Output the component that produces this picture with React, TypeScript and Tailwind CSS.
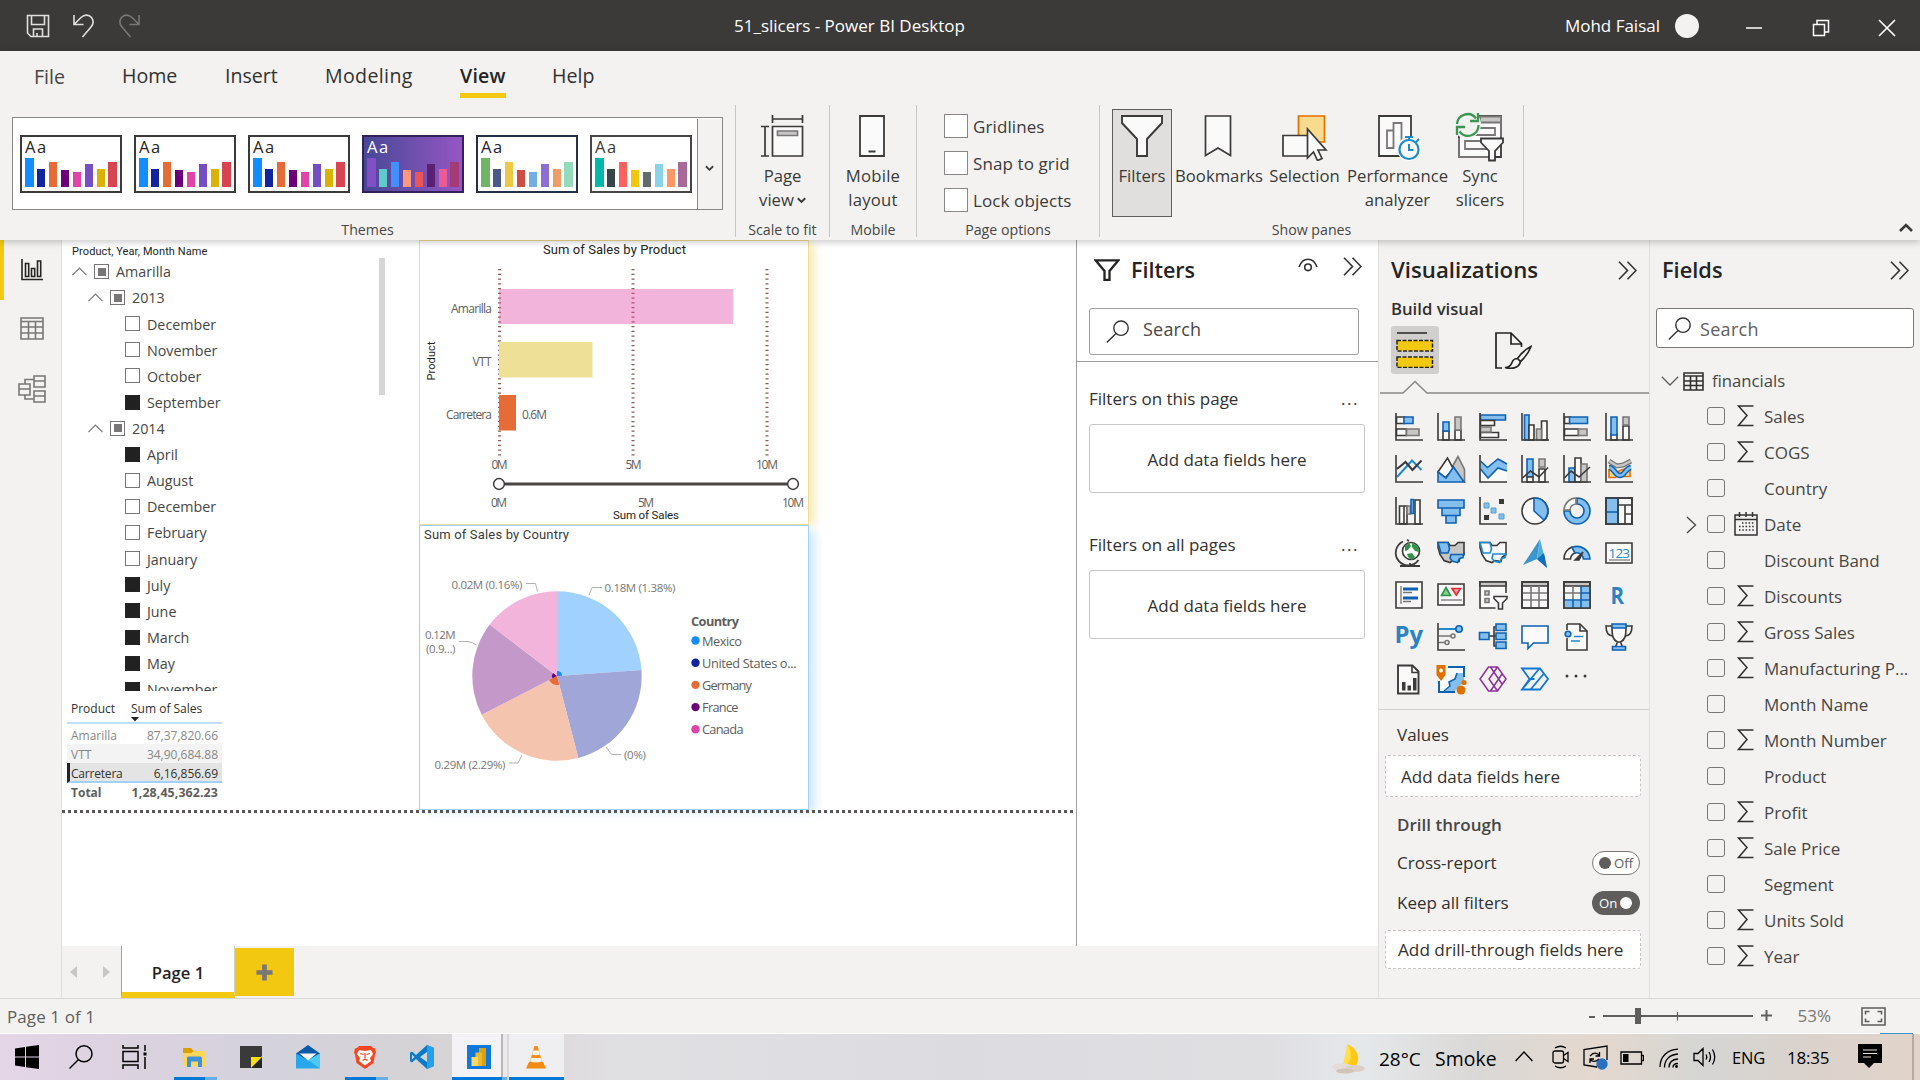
import type { ReactNode } from "react";

const INK = "#3b3a39";
const BLUE = "#0f62b3";
const SKY = "#83beec";
const GREY = "#797775";
const SILVER = "#c8c6c4";
const PAPER = "#fafafa";

/* ---------- title bar ---------- */

function TitleBar() {
  return (
    <header className="flex h-[51px] shrink-0 items-center bg-[#3b3a39] text-[17px] text-white">
      <div className="flex w-[734px] items-center gap-[22px] pl-[26px]">
        <svg width="24" height="24" viewBox="0 0 24 24" fill="none" stroke="#e1dfdd" strokeWidth="1.600">
          <path d="M1.500 1.500h21v21H5l-3.500-3.500z" />
          <path d="M5.500 1.500v9h13v-9M7.500 22v-7h9v7M11 22v-3" />
        </svg>
        <svg width="24" height="24" viewBox="0 0 24 24" fill="none" stroke="#e1dfdd" strokeWidth="1.600">
          <path d="M2 1v9.500h9.500M2.500 10l6.500-6.500c3.500-3.300 8-3 10.500 0 2.500 3.200 2 6.500-.5 9.500L10.500 23" />
        </svg>
        <svg width="24" height="24" viewBox="0 0 24 24" fill="none" stroke="#797775" strokeWidth="1.600" className="-ml-[1px]">
          <path d="M22 1v9.500h-9.500M21.500 10L15 3.500c-3.500-3.300-8-3-10.500 0-2.500 3.200-2 6.500.5 9.500l8.500 10" />
        </svg>
      </div>
      <div className="w-[232px] whitespace-nowrap pt-px">51_slicers - Power BI Desktop</div>
      <div className="flex flex-1 items-center justify-end pr-[24px]">
        <span className="pt-px">Mohd Faisal</span>
        <span className="ml-[15px] size-[24px] rounded-full bg-[#f3f2f1]" />
        <svg className="ml-[46px]" width="18" height="18" viewBox="0 0 18 18" stroke="#fff" strokeWidth="1.500"><path d="M1 11h16" /></svg>
        <svg className="ml-[49px] mt-[4px]" width="18" height="18" viewBox="0 0 18 18" fill="none" stroke="#fff" strokeWidth="1.500"><path d="M1.500 5.500h11v11h-11zM5 5V1.500h11.500V13H13" /></svg>
        <svg className="ml-[48px] mt-[4px]" width="18" height="18" viewBox="0 0 18 18" stroke="#fff" strokeWidth="1.700"><path d="M1 1l16 16M17 1L1 17" /></svg>
      </div>
    </header>
  );
}

/* ---------- ribbon ---------- */

function Tabs() {
  return (
    <nav className="flex h-[54px] shrink-0 text-[19.600px] leading-[50px] text-[#323130]">
      <span className="ml-[34px] w-[88px] pt-px text-[#484644]">File</span>
      <span className="w-[103px]">Home</span>
      <span className="w-[100px]">Insert</span>
      <span className="w-[135px] tracking-[0.350px]">Modeling</span>
      <span className="h-[47px] w-[46px] border-b-[5px] border-[#f2c811] font-semibold tracking-[0.200px] text-[#252423]">View</span>
      <span className="ml-[46px]">Help</span>
    </nav>
  );
}

const barHeights = [29, 18, 25, 17, 15, 23, 18, 25];
const classic = ["#118dff", "#12239e", "#e66c37", "#6b007b", "#e044a7", "#744ec2", "#d9b300", "#d64550"];
const themes = [
  { box: "border-[#3b3a39] bg-white", text: "text-[#252423]", bars: classic },
  { box: "border-[#3b3a39] bg-white", text: "text-[#252423]", bars: classic },
  { box: "border-[#3b3a39] bg-white", text: "text-[#252423]", bars: classic },
  {
    box: "border-[#33225a] bg-linear-to-r from-[#474796] to-[#9556c4]",
    text: "text-white",
    bars: ["#8250c4", "#5ecbc8", "#438fff", "#ff977e", "#eb5757", "#5b2071", "#ec5a96", "#a43b76"],
  },
  {
    box: "border-[#252f4a] bg-white",
    text: "text-[#1b1f3a]",
    bars: ["#70b565", "#4a588a", "#ecc846", "#cd4c46", "#71afe2", "#8d6fd1", "#ee9e64", "#95dabb"],
  },
  {
    box: "border-[#484644] bg-white",
    text: "text-[#3b3a39]",
    bars: ["#01b8aa", "#374649", "#fd625e", "#f2c80f", "#5f6b6d", "#8ad4eb", "#fe9666", "#a66999"],
  },
];

function ThemeThumb({ box, text, bars }: (typeof themes)[number]) {
  return (
    <div className={`flex h-[58px] w-[102px] flex-col justify-between border-2 px-[3px] pb-[4px] ${box}`}>
      <span className={`text-[16.500px] leading-[20px] tracking-[1.500px] ${text}`}>Aa</span>
      <div className="flex items-end gap-[3.400px]">
        {bars.map((c, i) => (
          <span key={i} className="w-[8.600px]" style={{ height: barHeights[i], background: c }} />
        ))}
      </div>
    </div>
  );
}

function Group({ width, label, children }: { width: string; label: string; children: ReactNode }) {
  return (
    <section className={`flex h-[132px] shrink-0 flex-col border-r border-[#c8c6c4] ${width}`}>
      <div className="flex h-[112px] shrink-0">{children}</div>
      <div className="h-[20px] text-center text-[14.200px] leading-[25px] text-[#484644]">{label}</div>
    </section>
  );
}

function Tool({ className, icon, children }: { className: string; icon: ReactNode; children: ReactNode }) {
  return (
    <div className={`flex shrink-0 flex-col items-center whitespace-nowrap text-center text-[16.700px] leading-[24px] text-[#3b3a39] ${className}`}>
      <div className="mb-[7px] flex h-[42px] items-center justify-center">{icon}</div>
      {children}
    </div>
  );
}

const pageViewIcon = (
  <svg width="44" height="42" viewBox="0 0 44 42" fill="none" stroke={INK} strokeWidth="1.700" className="mr-[2px]">
    <path d="M12.500 0v8M42.500 0v8M12.500 4h30" />
    <path d="M1 11.500h8M1 41h8M5 11.500V41" />
    <path d="M12.500 11.500h30V41h-30z" fill={PAPER} />
    <path d="M17.500 16h20v4.500h-20z" fill={SILVER} stroke={GREY} />
  </svg>
);
const mobileIcon = (
  <svg width="26" height="42" viewBox="0 0 26 42" fill={PAPER} stroke={INK} strokeWidth="1.800" className="mr-[2px]">
    <path d="M1 1h24v40H1zM9.500 36.500h7" />
  </svg>
);
const funnelIcon = (
  <svg width="42" height="42" viewBox="0 0 42 42" fill={PAPER} stroke={INK} strokeWidth="1.900">
    <path d="M1 1h40v7L26 24v17H16V24L1 8z" />
  </svg>
);
const bookmarkIcon = (
  <svg width="28" height="42" viewBox="0 0 28 42" fill={PAPER} stroke={INK} strokeWidth="1.700" className="mr-[2px]">
    <path d="M1.500 1h25v39.500L14 33 1.500 40.500z" />
  </svg>
);
const selectionIcon = (
  <svg width="46" height="46" viewBox="0 0 46 46" className="mt-[4px]" strokeWidth="1.700">
    <path d="M16.500 1h26v26h-26z" fill="#f8db8f" stroke="#e07000" />
    <path d="M1 20.500h25V41H1z" fill={PAPER} stroke={INK} />
    <path d="M25.500 14v29l6-6 4 8.500 4.500-2-4-8.500h8z" fill={PAPER} stroke={INK} />
  </svg>
);
const performanceIcon = (
  <svg width="44" height="46" viewBox="0 0 44 46" className="ml-[4px] mt-[4px]" fill="none" strokeWidth="1.800">
    <path d="M1 1h32v40H1z" fill={PAPER} stroke={INK} />
    <path d="M9 33V15.500h6.500V33zM15.500 33V8h8v25" stroke={GREY} />
    <circle cx="31" cy="34" r="12" fill={PAPER} stroke="none" />
    <circle cx="31" cy="34.500" r="9.500" fill={PAPER} stroke="#1e8bcd" strokeWidth="2.200" />
    <path d="M27 22h8M31 22v3M38 27l3-3M31 29v6h4.500" stroke="#1e8bcd" strokeWidth="2" />
  </svg>
);
const syncIcon = (
  <svg width="50" height="50" viewBox="0 0 50 50" className="mt-[2px]" fill="none" strokeWidth="1.800">
    <path d="M4 4h42v41H4z" fill={PAPER} stroke={INK} />
    <path d="M25 4.500h21v6H25z" fill={SILVER} stroke={GREY} />
    <path d="M4 26V45h29M46 10v15M10 29h24v8H10zM23 16h17v7H20" stroke={GREY} />
    <circle cx="12" cy="12.500" r="14" fill="#f3f2f1" />
    <path d="M2 12a10.500 10.500 0 0 1 19-5.500M23.500 13a10.500 10.500 0 0 1-19 6.500" stroke="#3a9650" strokeWidth="2.300" />
    <path d="M23 1v8h-8M2 23v-8h8" stroke="#3a9650" strokeWidth="2.300" />
    <path d="M26 26.500h22v4l-8 8.500v9.500h-6V39l-8-8.500z" fill={PAPER} stroke={INK} />
  </svg>
);

function Ribbon() {
  return (
    <div className="relative z-10 h-[189px] shrink-0 bg-[#f3f2f1] shadow-[0_2px_7px_rgba(0,0,0,0.22)]">
      <Tabs />
      <div className="flex h-[135px]">
        <Group width="w-[736px]" label="Themes">
          <div className="ml-[12px] mt-[12px] flex h-[93px] w-[711px] border border-[#8a8886] bg-white">
            <div className="flex flex-1 gap-[12px] pl-[7px] pt-[17px]">
              {themes.map((t, i) => (
                <ThemeThumb key={i} {...t} />
              ))}
            </div>
            <div className="mt-px flex w-[25px] items-center justify-center border-l border-[#8a8886] bg-[#f3f2f1]">
              <svg width="9" height="7" viewBox="0 0 10 7" className="mt-[9px] mr-[2px]" fill="none" stroke={INK} strokeWidth="2"><path d="M1 1l4 4 4-4" /></svg>
            </div>
          </div>
        </Group>
        <Group width="w-[94px]" label="Scale to fit">
          <Tool className="w-full pt-[10px]" icon={pageViewIcon}>
            <span>Page</span>
            <span className="flex items-center gap-[3px]">
              view
              <svg width="9" height="7" viewBox="0 0 9 7" fill="none" stroke={INK} strokeWidth="2"><path d="M.8 1.200l3.700 3.700 3.700-3.700" /></svg>
            </span>
          </Tool>
        </Group>
        <Group width="w-[87px]" label="Mobile">
          <Tool className="w-full pt-[10px]" icon={mobileIcon}>
            <span className="tracking-[0.200px]">Mobile</span>
            <span className="tracking-[0.200px]">layout</span>
          </Tool>
        </Group>
        <Group width="w-[183px]" label="Page options">
          <div className="ml-[27px] mt-[9px] flex flex-col gap-[13px] text-[17px] leading-[24px] text-[#3b3a39]">
            {["Gridlines", "Snap to grid", "Lock objects"].map((t) => (
              <label key={t} className="flex h-[24px] items-center gap-[5px]">
                <span className="size-[24px] border border-[#8a8886] bg-white" />
                <span className="pt-px tracking-[0.100px]">{t}</span>
              </label>
            ))}
          </div>
        </Group>
        <Group width="w-[424px]" label="Show panes">
          <Tool className="ml-[12px] mt-[4px] h-[108px] w-[60px] border border-[#605e5c] bg-[#e1dfdd] pt-[5px]" icon={funnelIcon}>Filters</Tool>
          <Tool className="ml-[2px] w-[90px] pt-[10px]" icon={bookmarkIcon}>Bookmarks</Tool>
          <Tool className="ml-[3px] w-[75px] pt-[10px]" icon={selectionIcon}>Selection</Tool>
          <Tool className="ml-[4px] w-[103px] pt-[10px]" icon={performanceIcon}>
            <span>Performance</span>
            <span>analyzer</span>
          </Tool>
          <Tool className="ml-[3px] w-[56px] pt-[10px]" icon={syncIcon}>
            <span>Sync</span>
            <span>slicers</span>
          </Tool>
        </Group>
        <svg className="mb-[8px] ml-auto mr-[7px] self-end" width="14" height="9" viewBox="0 0 14 9" fill="none" stroke={INK} strokeWidth="2.600"><path d="M1 8l6-6 6 6" /></svg>
      </div>
    </div>
  );
}

/* ---------- left navigation ---------- */

function SideNav() {
  return (
    <aside className="flex w-[62px] shrink-0 flex-col border-r border-[#e1dfdd] bg-[#f3f2f1]">
      <div className="flex h-[60px] items-center border-l-4 border-[#f2c811] pl-[17px]">
        <svg width="22" height="22" viewBox="0 0 22 22" fill="none" stroke="#252423" strokeWidth="1.600">
          <path d="M1 0v20.500h21M4.500 4.500h3.200v13H4.500zM10.500 9.500h3.200v8h-3.200zM16.500 2h3.200v15.500h-3.200z" />
        </svg>
      </div>
      <svg className="ml-[20px] mt-[17px]" width="24" height="23" viewBox="0 0 24 23" fill="none" stroke={GREY} strokeWidth="1.600">
        <path d="M1 1h22v21H1zM1 4.500h22M1 10h22M1 16h22M8.500 4.500V22M15.500 4.500V22" />
      </svg>
      <svg className="ml-[18px] mt-[35px]" width="28" height="28" viewBox="0 0 28 28" fill="none" stroke={GREY} strokeWidth="1.600">
        <path d="M16 1h11v11H16zM16 6h11M16 16h11v11H16zM16 21h11M1 9h11v11H1zM1 14h11M7 9V4.500h9M7 20v4h9" />
      </svg>
    </aside>
  );
}

/* ---------- report canvas ---------- */

type SlicerRow = { label: string; level: 0 | 1 | 2; state: "some" | "on" | "off" };
const slicerRows: SlicerRow[] = [
  { label: "Amarilla", level: 0, state: "some" },
  { label: "2013", level: 1, state: "some" },
  { label: "December", level: 2, state: "off" },
  { label: "November", level: 2, state: "off" },
  { label: "October", level: 2, state: "off" },
  { label: "September", level: 2, state: "on" },
  { label: "2014", level: 1, state: "some" },
  { label: "April", level: 2, state: "on" },
  { label: "August", level: 2, state: "off" },
  { label: "December", level: 2, state: "off" },
  { label: "February", level: 2, state: "off" },
  { label: "January", level: 2, state: "off" },
  { label: "July", level: 2, state: "on" },
  { label: "June", level: 2, state: "on" },
  { label: "March", level: 2, state: "on" },
  { label: "May", level: 2, state: "on" },
  { label: "November", level: 2, state: "on" },
];
const indent = ["pl-0", "pl-[16px]", "pl-[53px]"];
const boxState = {
  some: "border border-[#797775] bg-white",
  on: "border border-[#252423] bg-[#212121]",
  off: "border border-[#797775] bg-white",
};

function Slicer() {
  return (
    <div className="absolute left-[10px] top-[5px] w-[330px]">
      <div className="w-max font-['Roboto'] text-[11px] leading-[13px] tracking-[0.100px] text-[#252423]">Product, Year, Month Name</div>
      <div className="h-[433px] overflow-hidden pt-[0.500px]">
        {slicerRows.map((r, i) => (
          <div key={i} className={`flex h-[26.120px] items-center text-[14.300px] text-[#484644] ${indent[r.level]}`}>
            {r.level < 2 && (
              <svg className="mr-[7px]" width="15" height="9" viewBox="0 0 15 9" fill="none" stroke={GREY} strokeWidth="1.200"><path d="M.5 8.200L7.500 1l7 7.200" /></svg>
            )}
            <span className={`flex size-[15px] items-center justify-center ${boxState[r.state]}`}>
              {r.state === "some" && <span className="size-[8px] bg-[#797775]" />}
            </span>
            <span className="ml-[7px] pt-px">{r.label}</span>
          </div>
        ))}
      </div>
    </div>
  );
}

function SalesTable() {
  return (
    <div className="absolute left-[5px] top-[457px] w-[155px] text-[12px]">
      <div className="flex h-[27px] border-b-2 border-[#bfe0ff] pl-[4px] leading-[23px] text-[#323130]">
        <span className="w-[60px]">Product</span>
        <span className="relative">
          Sum of Sales
          <svg className="absolute left-0 top-[20px]" width="8" height="5" viewBox="0 0 8 5"><path d="M0 0h8L4 4.500z" fill="#252423" /></svg>
        </span>
      </div>
      <div className="flex h-[20px] justify-between pl-[4px] pr-[4px] leading-[24px] text-[#8a8886]"><span>Amarilla</span><span>87,37,820.66</span></div>
      <div className="flex h-[19px] justify-between bg-[#f3f3f3] pl-[4px] pr-[4px] leading-[22px] text-[#8a8886]"><span>VTT</span><span>34,90,684.88</span></div>
      <div className="flex h-[20px] justify-between border-b-2 border-l-[3px] border-b-[#a0d1ff] border-l-[#252423] bg-[#e4e4e4] pl-[1px] pr-[4px] leading-[21px] text-[#323130]"><span className="tracking-[-0.200px]">Carretera</span><span>6,16,856.69</span></div>
      <div className="flex h-[20px] justify-between pl-[4px] pr-[4px] leading-[19px] font-bold text-[#605e5c]"><span>Total</span><span className="text-[12.400px] tracking-[0.100px]">1,28,45,362.23</span></div>
    </div>
  );
}

function BarVisual() {
  return (
    <div className="absolute left-[357px] top-0 h-[285px] w-[390px] border border-[#f0dd8e] bg-white shadow-[8px_2px_9px_-2px_rgba(244,225,150,0.65)]">
      <svg width="388" height="283" viewBox="420 241 388 283" fontFamily="Open Sans, sans-serif" fontSize="12" fill="#605e5c">
        <text x="543" y="254" textLength="143" fontFamily="Roboto, sans-serif" fontSize="13" fill="#252423">Sum of Sales by Product</text>
        {[499.500, 633, 767].map((x) => (
          <path key={x} d={`M${x} 269v187`} stroke="#8c5a50" strokeWidth="3" strokeDasharray="1.300 3.450" />
        ))}
        <rect x="499" y="289" width="234" height="35" fill="#e044a7" fillOpacity="0.400" />
        <rect x="499" y="342" width="93.500" height="35.500" fill="#efe098" />
        <rect x="499" y="395" width="17" height="35.500" fill="#e66c37" />
        <text x="451" y="312.500" textLength="41">Amarilla</text>
        <text x="472.500" y="365.500" textLength="19">VTT</text>
        <text x="446" y="418.500" textLength="46">Carretera</text>
        <text x="522" y="418.500" textLength="25">0.6M</text>
        <text x="491.500" y="468.500" textLength="16">0M</text>
        <text x="625.500" y="468.500" textLength="16">5M</text>
        <text x="756" y="468.500" textLength="22">10M</text>
        <path d="M505 484h282" stroke="#484644" strokeWidth="3.200" />
        <circle cx="499" cy="484" r="5.400" fill="#fff" stroke={INK} strokeWidth="1.500" />
        <circle cx="793" cy="484" r="5.400" fill="#fff" stroke={INK} strokeWidth="1.500" />
        <text x="491" y="506.500" textLength="16">0M</text>
        <text x="638" y="506.500" textLength="16">5M</text>
        <text x="782" y="506.500" textLength="22">10M</text>
        <text x="613" y="519" textLength="66" fontFamily="Roboto, sans-serif" fontSize="11.500" fill="#252423">Sum of Sales</text>
        <text transform="translate(435 380.500) rotate(-90)" textLength="39" fontFamily="Roboto, sans-serif" fontSize="11" fill="#252423">Product</text>
      </svg>
    </div>
  );
}

const slices = [
  { from: 0, to: 86, fill: "#a0d1ff", core: "#118dff", r: 5 },
  { from: 86, to: 165.400, fill: "#a0a7d8", core: "#12239e", r: 0 },
  { from: 165.400, to: 242.800, fill: "#f5c4af", core: "#e66c37", r: 9 },
  { from: 242.800, to: 307.400, fill: "#c499ca", core: "#6b007b", r: 5 },
  { from: 307.400, to: 360, fill: "#f3b4dc", core: "#e044a7", r: 0 },
];
const legend = [
  ["Mexico", "#118dff"],
  ["United States o...", "#12239e"],
  ["Germany", "#e66c37"],
  ["France", "#6b007b"],
  ["Canada", "#e044a7"],
];

function wedge(from: number, to: number, r: number) {
  const p = (deg: number) => {
    const a = (deg * Math.PI) / 180;
    return `${(557 + r * Math.sin(a)).toFixed(2)} ${(676 - r * Math.cos(a)).toFixed(2)}`;
  };
  return `M557 676L${p(from)}A${r} ${r} 0 0 1 ${p(to)}Z`;
}

function PieVisual() {
  return (
    <div className="absolute left-[357px] top-[285px] h-[285px] w-[390px] border border-[#a0d1ff] bg-white shadow-[8px_4px_9px_-2px_rgba(190,224,255,0.750)]">
      <svg width="388" height="283" viewBox="420 526 388 283" fontFamily="Open Sans, sans-serif" fontSize="11.500" fill="#797775">
        <text x="424" y="539" textLength="145" fontFamily="Roboto, sans-serif" fontSize="13" fill="#3b3a39">Sum of Sales by Country</text>
        {slices.map((s) => (
          <path key={s.from} d={wedge(s.from, s.to, 84.700)} fill={s.fill} />
        ))}
        {slices.filter((s) => s.r > 0).map((s) => (
          <path key={s.from} d={wedge(s.from, s.to, s.r)} fill={s.core} />
        ))}
        <path d="M526 583.500h9.500l2 8M589 595l3-7.500h10M459 641.500h9q5 1 8.500 3.500M509 763h9l4-8M606 747l5.500 7.500H621" fill="none" stroke="#b3b0ad" />
        <text x="451.500" y="588.500" textLength="71">0.02M (0.16%)</text>
        <text x="604.500" y="592" textLength="71">0.18M (1.38%)</text>
        <text x="425" y="639" textLength="30.500">0.12M</text>
        <text x="426" y="653" textLength="29.500">(0.9...)</text>
        <text x="434.500" y="768.500" textLength="71">0.29M (2.29%)</text>
        <text x="624" y="759" textLength="22">(0%)</text>
        <g fontSize="12.800" fill="#605e5c">
          <text x="691" y="626" textLength="48" fontWeight="700">Country</text>
          {legend.map(([name, color], i) => (
            <g key={name}>
              <circle cx="695.500" cy={640.500 + i * 22.200} r="4.200" fill={color} />
              <text x="702" y={645.500 + i * 22.200} textLength={[40, 94.500, 50, 36.500, 41.500][i]}>{name}</text>
            </g>
          ))}
        </g>
      </svg>
    </div>
  );
}

function Canvas() {
  return (
    <div className="relative w-[1014px] shrink-0 overflow-hidden bg-white">
      <Slicer />
      <div className="absolute left-[317px] top-[18px] h-[137px] w-[6px] bg-[#d6d6d6]" />
      <SalesTable />
      <BarVisual />
      <PieVisual />
      <div className="absolute left-0 top-[570px] h-[3px] w-full bg-[repeating-linear-gradient(90deg,#5a5856_0_3px,transparent_3px_6px)]" />
    </div>
  );
}

/* ---------- filters pane ---------- */

function DoubleChevron() {
  return (
    <svg width="19" height="19" viewBox="0 0 19 19" fill="none" stroke="#323130" strokeWidth="1.600"><path d="M1 .8l8.500 8.700L1 18.200M9.500.8L18 9.500l-8.500 8.700" /></svg>
  );
}

function Magnifier() {
  return (
    <svg width="23" height="23" viewBox="0 0 23 23" fill="none" stroke="#323130" strokeWidth="1.400"><circle cx="15" cy="8.200" r="7.200" /><path d="M10 13.500L.8 22.500" /></svg>
  );
}

function FilterSection({ title, className }: { title: string; className: string }) {
  return (
    <div className={className}>
      <div className="flex justify-between pr-[6px] leading-[24px] text-[#323130]">
        <span>{title}</span>
        <span className="tracking-[1.500px]">...</span>
      </div>
      <div className="mt-[13px] flex h-[69px] items-center justify-center rounded-[3px] border border-[#c8c6c4] pt-[2px] text-[#323130]">Add data fields here</div>
    </div>
  );
}

function FiltersPane() {
  return (
    <aside className="flex flex-1 flex-col border-l border-[#a19f9d] bg-white text-[17px]">
      <div className="flex h-[60px] items-center pl-[17px] pr-[16px]">
        <svg width="26" height="22" viewBox="0 0 26 22" className="mb-px" fill="none" stroke="#252423" strokeWidth="2.300"><path d="M1.500 1.300h23L15.500 12v9h-5v-9z" /></svg>
        <span className="ml-[11px] text-[21.500px] font-semibold text-[#252423]">Filters</span>
        <svg className="mb-[10px] ml-auto mr-[25px]" width="20" height="14" viewBox="0 0 20 14" fill="none" stroke="#323130" strokeWidth="1.600"><path d="M1 9C3 3.500 6.500 1.200 10 1.200S17 3.500 19 9" /><circle cx="10" cy="9.300" r="3.300" /></svg>
        <span className="mb-[8px]"><DoubleChevron /></span>
      </div>
      <div className="ml-[12px] mt-[8px] flex h-[47px] w-[270px] items-center rounded-[3px] border border-[#a19f9d] pl-[16px] text-[18px] text-[#484644]">
        <Magnifier />
        <span className="ml-[14px] pb-[4px] tracking-[0.200px]">Search</span>
      </div>
      <div className="mt-[6px] border-t border-[#a19f9d]" />
      <FilterSection className="ml-[12px] mr-[13px] mt-[25px]" title="Filters on this page" />
      <FilterSection className="ml-[12px] mr-[13px] mt-[40px]" title="Filters on all pages" />
    </aside>
  );
}

function PageTabs() {
  return (
    <div className="flex h-[52px] bg-[#f3f2f1]">
      <div className="flex w-[59px] items-center justify-between pl-[8px] pr-[11px]">
        <svg width="7" height="12" viewBox="0 0 7 12"><path d="M7 0v12L0 6z" fill="#c8c6c4" /></svg>
        <svg width="7" height="12" viewBox="0 0 7 12"><path d="M0 0v12l7-6z" fill="#c8c6c4" /></svg>
      </div>
      <div className="w-[114px] border-b-[6px] border-l border-r border-b-[#f2c811] border-l-[#a19f9d] border-r-[#d2d0ce] bg-white pt-[2px] text-center text-[16.600px] font-semibold leading-[50px] text-[#252423]">Page 1</div>
      <div className="mt-[2px] flex h-[48px] w-[59px] items-center justify-center bg-[#f2c811]">
        <svg width="17" height="17" viewBox="0 0 18 18" stroke={GREY} strokeWidth="5"><path d="M9 .5v17M.5 9h17" /></svg>
      </div>
    </div>
  );
}

/* ---------- visualizations pane ---------- */

function G({ children }: { children: ReactNode }) {
  return (
    <svg width="28" height="28" viewBox="0 0 28 28" fill="none" stroke={INK} strokeWidth="1.600" className="overflow-visible">{children}</svg>
  );
}
const axes = <path d="M1 0v27h27" />;
const region = "M1 3.500h10l2 3h5l3-3h6v12l-4 3-1 4-6-1-3 2-6-2-4-6-2-7z";

const visualIcons: ReactNode[] = [
  <G><path d="M1.500 4h8v6.500h-8z" fill={PAPER} /><path d="M9 4h9v6.500H9z" fill={SKY} stroke={BLUE} /><path d="M1.500 16h10v6.500h-10z" fill={PAPER} /><path d="M11.500 16H24v6.500H11.500z" fill={SILVER} stroke={GREY} />{axes}</G>,
  <G><path d="M6 18h6v9H6zM18 17h6v10h-6z" fill={PAPER} /><path d="M6 9h6v9H6z" fill={SKY} stroke={BLUE} /><path d="M18 4h6v13h-6z" fill={SILVER} stroke={GREY} />{axes}</G>,
  <G><path d="M1.500 2h25v5h-25z" fill={SKY} stroke={BLUE} /><path d="M1.500 7.500h14v5h-14zM1.500 19.500h18v5h-18z" fill={PAPER} /><path d="M1.500 14h10.500v5H1.500z" fill={SILVER} stroke={GREY} />{axes}</G>,
  <G><path d="M3.500 2h4.500v25H3.500z" fill={SKY} stroke={BLUE} /><path d="M8 12h5v15H8zM20.500 8h5.500v19h-5.500z" fill={PAPER} /><path d="M15.500 16h5v11h-5z" fill={SILVER} stroke={GREY} />{axes}</G>,
  <G><path d="M1.500 4h6v6.500h-6z" fill={PAPER} /><path d="M6.500 4h18v6.500h-18z" fill={SKY} stroke={BLUE} /><path d="M1.500 16h14v6.500h-14z" fill={PAPER} /><path d="M15.500 16H24v6.500h-8.500z" fill={SILVER} stroke={GREY} />{axes}</G>,
  <G><path d="M6 21h6v6H6zM18 13h6v14h-6z" fill={PAPER} /><path d="M6 4h6v18H6z" fill={SKY} stroke={BLUE} /><path d="M18 4h6v8h-6z" fill={SILVER} stroke={GREY} />{axes}</G>,

  <G><path d="M2 22L17 5.500l9.500 9.500" stroke="#1e8bcd" strokeWidth="2" /><path d="M2 14l8.500-7 7 8L26.500 5.500" strokeWidth="2" />{axes}</G>,
  <G><path d="M14 14l7-12.500 6.500 13V27L18 20z" fill={SILVER} stroke={GREY} /><path d="M1 17L10.500 3l6 11L8 23z" fill={PAPER} /><path d="M1 17l8 6 7.500-11L27 27H1z" fill={SKY} stroke={BLUE} /></G>,
  <G><path d="M1.500 8l7 5 9.500-8.500 9.500 4V27h-26z" fill={PAPER} stroke="none" /><path d="M1.500 6l7 6.500L19 4l9 5v7l-9-3-10 10-7.500-9z" fill={SKY} stroke="none" /><path d="M1.500 6l7 6.500L19 4l9 5M1.500 14L9 23l10-10 9 3" stroke={BLUE} />{axes}</G>,
  <G><path d="M6 4h6v18H6z" fill={SKY} stroke={BLUE} /><path d="M18 4h6v8h-6z" fill={SILVER} stroke={GREY} /><path d="M6 22h6v5H6zM18 14h6v13h-6z" fill={PAPER} /><path d="M1.500 23l8-7 8.500 6 9-9.500" />{axes}</G>,
  <G><path d="M6 13h6v14H6z" fill={SKY} stroke={BLUE} /><path d="M12 3h6v24h-6z" fill={PAPER} /><path d="M18 9h6v18h-6z" fill={SILVER} stroke={GREY} /><path d="M1.500 23L8 16l8 6L27 12" />{axes}</G>,
  <G><path d="M4 14.500h4l3 3 6-3h8v7h-7l-3-2-5 3H4z" fill="#f8db8f" stroke="#e07000" /><path d="M4 6l8 5 6-1 8-4" stroke={GREY} strokeWidth="5" /><path d="M4 6l8 5 6-1 8-4" stroke={SILVER} strokeWidth="2.500" /><path d="M4 12.500c5 0 6 8 11 8s5-7 11-8" stroke={BLUE} strokeWidth="5.500" /><path d="M4 12.500c5 0 6 8 11 8s5-7 11-8" stroke={SKY} strokeWidth="2.500" />{axes}</G>,

  <G><path d="M4.500 9H9v18H4.500zM9 9h3v18H9zM20 3h5v24h-5z" fill={PAPER} /><path d="M12 9h3.500v8H12z" fill={SILVER} stroke={GREY} /><path d="M16 2.500h2.500v14H16z" fill={SKY} stroke={BLUE} />{axes}</G>,
  <G><path d="M1 3h26v8H1zM5 11h18v7.500H5zM9 18.500h10V26H9z" fill={SKY} stroke={BLUE} /></G>,
  <G><g stroke="none"><path d="M20 2h5v5h-5zM5 18h5v5H5z" fill={INK} /><path d="M5 6h5v5H5zM12 11h5v5h-5zM20 17h5v5h-5z" fill={SKY} stroke="#5a9fd6" strokeWidth="1" /></g>{axes}</G>,
  <G><circle cx="14" cy="14" r="13" fill={PAPER} /><path d="M13 1a13 13 0 0 1 10 22l-10-9z" fill={SKY} stroke={BLUE} /></G>,
  <G><circle cx="14" cy="14" r="10" stroke={PAPER} strokeWidth="7" /><path d="M14 1v6a7 7 0 1 1-7 7H1A13 13 0 1 0 14 1z" fill={SKY} stroke={BLUE} /><path d="M1 13A12.500 12.500 0 0 1 13 1v6a6.500 6.500 0 0 0-6 6z" fill={PAPER} stroke={GREY} /></G>,
  <G><path d="M1 1h26v26H1z" fill={PAPER} /><path d="M1 1h12v26H1z" fill={SKY} stroke={BLUE} /><path d="M1 15h12" stroke={BLUE} /><path d="M1 1h26v26H1zM13 1v26M13 8h14M20 8v19M20 17h7" /></G>,

  <G><circle cx="16" cy="12" r="8.500" fill={PAPER} /><path d="M10 7l4-3 2 3-3 4-3 1zM17 4l6 3 1 6-4-1-3-4zM12 15l5-1 3 4-3 3-4-3z" fill="#2f9447" stroke="none" /><path d="M8 2.500A12.500 12.500 0 1 0 23.500 21M15 24v3M5 27h20" strokeWidth="1.800" /><path d="M12 .8L14 2" /></G>,
  <G><path d={region} fill={SILVER} /><path d="M1 3.500h10l1.500 6.500-1.500 4H4zM14 15.500h13v-2l-1 5-3.500 1-2 4-5.500-1.500-2-3z" fill={SKY} stroke={BLUE} /></G>,
  <G><path d={region} fill={PAPER} /><path d="M1 3.500h10l1.500 6.500-1.500 4H4zM14 15h13l-1 3.500-3.500 1-2 4-5.500-1.500-2-3z" stroke="#1e8bcd" /></G>,
  <G><path d="M19 0L2 26l14-6z" fill="#3a96cd" stroke="none" /><path d="M19 0l-3 20 10 9z" fill="#50b0dc" stroke="none" /><path d="M16 20l10 9-3-15z" fill="#0f6fc0" stroke="none" /></G>,
  <G><path d="M1 20A13 13 0 0 1 9 8l3 6a7 7 0 0 0-4.500 6z" fill={PAPER} /><path d="M9 8.500A13 13 0 0 1 27 20h-6.500A7 7 0 0 0 12 14z" fill={SKY} stroke={BLUE} /><path d="M12 21l8-8-4 8z" fill={INK} /></G>,
  <G><path d="M1 4h26v20H1z" fill={PAPER} /><path d="M4 21h21" stroke={GREY} strokeWidth="1.200" /><text x="3.500" y="18.500" fontSize="13.500" textLength="21.500" fill="#1e8bcd" stroke="none" fontFamily="Open Sans">123</text></G>,

  <G><path d="M1 1h26v26H1z" fill={PAPER} /><path d="M6 5v18M8 11.500h9M8 20.500h8" stroke={GREY} strokeWidth="1.300" /><path d="M8 8h15M8 17h15" stroke={BLUE} strokeWidth="2.800" /></G>,
  <G><path d="M1 3h26v21H1z" fill={PAPER} /><path d="M4.500 14.500h9L9 6.500z" fill="#84cf93" stroke="#2f9447" /><path d="M15 7.500h8.500L19.300 14z" fill="#f5a0a4" stroke="#dc2b33" /><path d="M4 19h21" stroke={GREY} strokeWidth="1.300" /></G>,
  <G><path d="M1 1h26v26H1z" fill={PAPER} /><path d="M1 1h26v4H1z" fill={SILVER} /><path d="M6 10h4v4H6zM6 17.500h4v4H6z" fill={SILVER} stroke={GREY} /><path d="M14 12h16v18H17z" fill="#f3f2f1" stroke="none" /><path d="M15 15.500h13v2L23.500 22v6h-4v-6L15 17.500z" fill={PAPER} /></G>,
  <G><path d="M1 1h26v26H1z" fill={PAPER} /><path d="M1 1h26v4H1z" fill={SILVER} /><path d="M1 12h26M1 19h26M10 5v22M18 5v22" stroke={GREY} /><path d="M1 1h26v26H1z" /></G>,
  <G><path d="M1 1h26v26H1z" fill={PAPER} /><path d="M18 5h9v22H1v-7.500h17z" fill={SKY} stroke="none" /><path d="M1 1h26v4H1z" fill={SILVER} /><path d="M1 12h17M10 5v14" stroke={GREY} /><path d="M18 5v22M18 12h9M1 19h26M10 19v8" stroke={BLUE} /><path d="M1 1h26v26H1z" /></G>,
  <G><text x="5.500" y="22.500" fontSize="23" fontWeight="700" textLength="13.500" lengthAdjust="spacingAndGlyphs" fill="#2a83c4" stroke="none" fontFamily="Open Sans">R</text></G>,

  <G><text x="-.5" y="20" fontSize="24" fontWeight="700" textLength="28.500" lengthAdjust="spacingAndGlyphs" fill="#2a83c4" stroke="none" fontFamily="Open Sans">Py</text></G>,
  <G><path d="M1.500 6H19" stroke="#1e8bcd" strokeWidth="2" /><circle cx="22" cy="6" r="3.200" fill={SKY} stroke={BLUE} /><path d="M1.500 13H14M1.500 19.500H8" stroke={GREY} /><circle cx="16" cy="13" r="2" stroke={GREY} /><circle cx="10" cy="19.500" r="2" stroke={GREY} />{axes}</G>,
  <G><path d="M10 13h7M22 4h-7v19h7" /><path d="M.5 9.500H10v7H.5zM17 1h10v6.500H17zM17 10h10v6.500H17zM17 19h10v6.500H17z" fill={SKY} stroke={BLUE} /></G>,
  <G><path d="M1 3h26v17H12.500L7 25.500V20H1z" fill={PAPER} stroke={BLUE} /></G>,
  <G><path d="M4 1h13l7 7v19H4V15M4 7V1" fill={PAPER} /><path d="M17 1v7h7" /><circle cx="5" cy="11" r="2.800" fill={SKY} stroke={BLUE} /><path d="M11 13.500h9M8 18h9" stroke="#1e8bcd" /></G>,
  <G><path d="M7 3H1c0 6 2 10 7 10M21 3h6c0 6-2 10-7 10" /><path d="M7 4h14c0 9-1 13-5.500 15h-3C8 17 7 13 7 4zM12.500 19l-2 5h7l-2-5" fill={PAPER} /><path d="M7 1h14v4H7zM7.500 23.500h13V27h-13z" fill={SKY} stroke={BLUE} /></G>,

  <G><path d="M3 .5h14.500l6 6v22H3z" fill={PAPER} strokeWidth="1.900" /><path d="M17 .5v7h7" /><path d="M7 17h3.500v8.500H7zM12.500 20.500H16v5h-3.500zM18 13h3.500v12.500H18z" fill={INK} stroke="none" /></G>,
  <G><path d="M3 2h24v25H2z" fill={PAPER} stroke="none" /><path d="M27 8l-7 0-2 6-6 3 1 5-6 5h10l5-6 5-3z" fill={SKY} stroke="none" /><path d="M11 2h16v10M2 16v11h16" stroke={BLUE} strokeWidth="2" /><path d="M20 8l-2 6-6 3 1 4-6 5" stroke={BLUE} /><path d="M-.5 0h9v10L4 16-.5 10z" fill="#e07000" stroke="none" /><circle cx="4" cy="5.500" r="2" fill="#fff" stroke="none" /><circle cx="24" cy="25" r="4.500" fill="#e07000" stroke="none" /><circle cx="27" cy="17.500" r="2.600" fill="#e07000" stroke="none" /></G>,
  <G><path d="M9.500 2h9L27 14l-8.500 12h-9L1 14zM18.500 2L10 14l8.500 12M11.500 2L23 19M11.500 26L23 9" stroke="#8e2f9c" strokeWidth="1.500" /></G>,
  <G><path d="M1 3.500h18L27 14l-8 10.500H1L8.500 14zM1 24.500L18 4M9.500 24.500L23 8.500M8.500 14h5" stroke="#0f78d4" strokeWidth="1.800" /></G>,
  <G><g fill={INK} stroke="none"><circle cx="4" cy="11" r="1.500" /><circle cx="13" cy="11" r="1.500" /><circle cx="22" cy="11" r="1.500" /></g></G>,
];

function VisualizationsPane() {
  return (
    <aside className="flex w-[272px] shrink-0 flex-col border-l border-r border-[#e1dfdd] bg-[#f3f2f1] text-[17px] text-[#323130]">
      <div className="flex h-[60px] items-center justify-between pl-[12px] pr-[12px]">
        <span className="text-[22.200px] font-semibold text-[#252423]">Visualizations</span>
        <DoubleChevron />
      </div>
      <div className="pl-[12px] text-[16.700px] font-semibold leading-[17px] text-[#323130]">Build visual</div>
      <div className="mt-[9px] flex h-[48px] items-center pl-[12px]">
        <div className="flex size-[48px] items-center justify-center rounded-[3px] bg-[#d0cfcd]">
          <svg width="38" height="36" viewBox="0 0 38 36" fill="#f2c811" stroke="#252423" strokeWidth="1.500" strokeDasharray="4 1.500">
            <path d="M1 1h30" strokeDasharray="none" />
            <path d="M1 8.500h35.500V19H1zM1 25h35.500v10.500H1z" />
          </svg>
        </div>
        <svg className="ml-[56px]" width="37" height="37" viewBox="0 0 37 37" fill="none" stroke="#252423" strokeWidth="1.700">
          <path d="M7 36H1V1h15l10.500 10.500V15M16 1v11h10.500" />
          <path d="M36 14.500c-5 2.500-10 7-13.500 12l3 3C30 25.500 34 20 36 14.500zM22.500 26.500c-3 0-4.500 1-5.500 4s-3 5-7 5c5 1.500 14 1.500 15.500-6" />
        </svg>
      </div>
      <svg className="mt-[6px] shrink-0" width="270" height="14" viewBox="0 0 270 14" fill="none" stroke="#8a8886" strokeWidth="1.500"><path d="M1 13h23L36 1.500 48 13h222" /></svg>
      <div className="mt-[19px] grid grid-cols-[repeat(6,28px)] gap-[14px] pl-[16px]">
        {visualIcons.map((icon, i) => (
          <div key={i} className="size-[28px]">{icon}</div>
        ))}
      </div>
      <div className="mt-[16px] border-t border-[#d2d0ce]" />
      <div className="mt-[13px] pl-[18px] leading-[24px]">Values</div>
      <div className="ml-[6px] mt-[8px] h-[42px] w-[256px] rounded-[3px] border border-dashed border-[#c8c6c4] bg-white pl-[15px] leading-[41px]">Add data fields here</div>
      <div className="mt-[16px] pl-[18px] font-semibold leading-[24px] text-[#484644]">Drill through</div>
      <div className="mt-[13px] flex h-[26px] items-center pl-[18px] pr-[9px]">
        <span className="flex-1">Cross-report</span>
        <span className="flex h-[24px] w-[48px] items-center gap-[3px] rounded-full border border-[#797775] bg-white pl-[6px] text-[13.200px] text-[#605e5c]"><span className="size-[12px] rounded-full bg-[#605e5c]" /><span className="pt-px">Off</span></span>
      </div>
      <div className="mt-[14px] flex h-[26px] items-center pl-[18px] pr-[9px]">
        <span className="flex-1">Keep all filters</span>
        <span className="flex h-[24px] w-[48px] items-center gap-[3px] rounded-full bg-[#605e5c] pl-[7px] text-[13.200px] text-white"><span className="pt-px">On</span><span className="size-[12px] rounded-full bg-white" /></span>
      </div>
      <div className="ml-[6px] mt-[14px] h-[39px] w-[256px] whitespace-nowrap rounded-[3px] border border-dashed border-[#c8c6c4] bg-white pl-[12px] text-[17.200px] leading-[38px]">Add drill-through fields here</div>
    </aside>
  );
}

/* ---------- fields pane ---------- */

type Kind = "sum" | "text" | "date";
const fields: [string, Kind][] = [
  ["Sales", "sum"],
  ["COGS", "sum"],
  ["Country", "text"],
  ["Date", "date"],
  ["Discount Band", "text"],
  ["Discounts", "sum"],
  ["Gross Sales", "sum"],
  ["Manufacturing P...", "sum"],
  ["Month Name", "text"],
  ["Month Number", "sum"],
  ["Product", "text"],
  ["Profit", "sum"],
  ["Sale Price", "sum"],
  ["Segment", "text"],
  ["Units Sold", "sum"],
  ["Year", "sum"],
];

function FieldRow({ name, kind }: { name: string; kind: Kind }) {
  return (
    <div className="flex h-[35.970px] items-center whitespace-nowrap">
      <span className="flex w-[57px] justify-end pr-[10px]">
        {kind === "date" && (
          <svg width="11" height="18" viewBox="0 0 11 18" fill="none" stroke="#484644" strokeWidth="1.300"><path d="M1 1l8.500 8L1 17" /></svg>
        )}
      </span>
      <span className="mb-[2px] size-[18px] rounded-[3px] border border-[#797775] bg-[#f3f2f1]" />
      <span className="mb-px flex w-[39px] justify-center">
        {kind === "sum" && (
          <svg className="ml-[2px]" width="17" height="22" viewBox="0 0 17 22" fill="none" stroke="#323130" strokeWidth="1.500"><path d="M16.500 1H1.500L10 10.500 1.500 20.500h15" /></svg>
        )}
        {kind === "date" && (
          <svg className="ml-[3px]" width="24" height="24" viewBox="0 0 24 24" fill="none" stroke="#323130" strokeWidth="1.500">
            <path d="M1 3h22v20H1zM1 7.500h22M5.500 0v5M12 0v5M18.500 0v5" />
            <path d="M8 11h12M5 14.500h15M5 18h15" strokeDasharray="1.500 1.800" />
          </svg>
        )}
      </span>
      <span>{name}</span>
    </div>
  );
}

function FieldsPane() {
  return (
    <aside className="flex flex-1 flex-col bg-[#f3f2f1] text-[17px] text-[#484644]">
      <div className="flex h-[60px] items-center justify-between pl-[12px] pr-[11px]">
        <span className="text-[21.800px] font-semibold text-[#252423]">Fields</span>
        <DoubleChevron />
      </div>
      <div className="ml-[6px] mt-[8px] flex h-[40px] w-[258px] items-center rounded-[3px] border border-[#797775] bg-white pl-[11px] text-[18px] text-[#605e5c]">
        <Magnifier />
        <span className="ml-[9px] pt-[2px] tracking-[0.300px]">Search</span>
      </div>
      <div className="mt-[20px] flex h-[26px] items-center pl-[11px]">
        <svg width="18" height="10" viewBox="0 0 18 10" fill="none" stroke="#605e5c" strokeWidth="1.300"><path d="M.8.800L9 9 17.200.8" /></svg>
        <svg className="ml-[4px]" width="21" height="19" viewBox="0 0 21 19" fill="none" stroke="#323130" strokeWidth="1.600"><path d="M1 1h19v17H1zM1 4h19M1 9h19M1 13.500h19M7.500 4v14M13.500 4v14" /></svg>
        <span className="ml-[8px] text-[16.700px]">financials</span>
      </div>
      <div className="mt-[5px]">
        {fields.map(([name, kind]) => (
          <FieldRow key={name} name={name} kind={kind} />
        ))}
      </div>
    </aside>
  );
}

/* ---------- status bar ---------- */

function StatusBar() {
  return (
    <footer className="flex h-[36px] shrink-0 items-center border-b border-t border-b-white border-t-[#d8d6d4] bg-[#f3f2f1] text-[17px] text-[#605e5c]">
      <span className="ml-[7px] pt-[2px] tracking-[0.100px]">Page 1 of 1</span>
      <svg className="ml-auto" width="188" height="20" viewBox="1588 1007 188 20" fill="none" stroke="#605e5c" strokeWidth="2">
        <path d="M1589 1018h6M1603 1017h150M1761 1016.500h11M1766.500 1011v11" />
        <path d="M1677.500 1013v8.500" strokeWidth="1.200" />
        <path d="M1635 1009h6v16h-6z" fill="#605e5c" stroke="none" />
      </svg>
      <span className="ml-[22px] text-[#797775]">53%</span>
      <svg className="ml-[30px] mr-[34px]" width="25" height="19" viewBox="0 0 25 19" fill="none" stroke="#605e5c" strokeWidth="1.600"><path d="M1 1h23v17H1z" /><path d="M4.500 7.500v-3h4M16.500 4.500h4v3M20.500 11.500v3h-4M8.500 14.500h-4v-3" /></svg>
    </footer>
  );
}

/* ---------- taskbar ---------- */

function Cell({ children, className = "" }: { children: ReactNode; className?: string }) {
  return <div className={`relative flex h-full w-[57px] items-center justify-center ${className}`}>{children}</div>;
}

function Taskbar() {
  return (
    <div className="relative flex h-[46px] shrink-0 items-center bg-[linear-gradient(90deg,#e4d6e7_0%,#dcd2e0_6%,#d4d2dc_14%,#d6d3d6_22%,#dad6d5_26%,#e0dfe2_32%,#dcdce0_50%,#dfdfe2_66%,#e5e8ea_71%,#dad8d6_77%,#e4d8cf_83%,#d5d5d3_89%,#dad2cc_94%,#e1d3c9_100%)] text-black">
      <Cell className="w-[54px]!">
        <svg width="24" height="24" viewBox="0 0 24 24"><path d="M0 3.400L10 2v9.500H0zM11 1.800L24 0v11.500H11zM0 12.500h10V22L0 20.600zM11 12.500h13V24l-13-1.800z" /></svg>
      </Cell>
      <Cell className="w-[54px]!">
        <svg width="24" height="24" viewBox="0 0 24 24" fill="none" stroke="#000" strokeWidth="1.500"><circle cx="15" cy="8.800" r="8" /><path d="M9.500 14.500L.5 23.500" /></svg>
      </Cell>
      <Cell className="w-[57.500px]! pr-[4px]">
        <svg width="25" height="24" viewBox="0 0 25 24" fill="none" stroke="#000" strokeWidth="1.500"><path d="M1 6.500h15v10H1zM1 0v3h15V0M1 24v-4h15v4M23 0v6M23 12v12" /><path d="M21.500 7.500h3v3h-3z" fill="#000" stroke="none" /></svg>
      </Cell>
      <Cell>
        <svg width="23" height="20" viewBox="0 0 23 20"><path d="M0 1h8l2.500 3H23v15.500H0z" fill="#ffd65c" /><path d="M0 1h8l2.500 3-2 2H0z" fill="#dba000" /><path d="M4 20v-9q0-1.500 1.500-1.500h12q1.500 0 1.500 1.500v9h-4v-5.500H8V20z" fill="#3e92d8" /></svg>
        <span className="absolute bottom-0 left-[8px] h-[3px] w-[31px] bg-[#0078d7]" />
        <span className="absolute bottom-0 left-[39px] h-[3px] w-[12px] bg-[#66aee6]" />
      </Cell>
      <Cell>
        <svg width="22" height="22" viewBox="0 0 22 22"><path d="M0 0h22v10l-11 12H0z" fill="#3a3a3a" /><path d="M11 11h11v11H11z" fill="#252525" /><path d="M11 11h11L11 22z" fill="#ffe100" /></svg>
      </Cell>
      <Cell>
        <svg width="24" height="24" viewBox="0 0 24 24"><path d="M0 8.500L12 0l12 8.500V23H0z" fill="#0a5aa8" /><path d="M0 8.500L12 15 24 8.500V23.500H0z" fill="#28a8ea" /><path d="M3.500 8.500h17L12 15.500z" fill="#f5f5f5" /><path d="M24 8.500v15L12 15z" fill="#4cc9f2" /></svg>
      </Cell>
      <Cell>
        <svg width="22" height="24" viewBox="0 0 22 24"><path d="M5 1h12l2 2 2 0.500 1 4-1 2-1.500 8.500L11 24l-8.500-6L1 9.500 0 7.500l1-4L3 3z" fill="#fb4420" /><path d="M5 5l6 1 6-1 2 4-3 4 1 3-6 4.500L5 16l1-3-3-4z" fill="#fff" /><path d="M6 8.500l3.500 1M16 8.500l-3.500 1M11 8v5M8.500 15.500l2.500-1.500 2.500 1.500" stroke="#fb4420" strokeWidth="1.300" fill="none" /></svg>
        <span className="absolute bottom-0 left-[8px] h-[3px] w-[31px] bg-[#0078d7]" />
        <span className="absolute bottom-0 left-[39px] h-[3px] w-[12px] bg-[#66aee6]" />
      </Cell>
      <Cell>
        <svg width="24" height="24" viewBox="0 0 24 24"><path d="M17 0l7 3v18l-7 3L6 14l-4 3.500L0 16.200V7.800l2-1.300L6 10zm0 7l-7 5 7 5zM2 9.500v5L4.500 12z" fill="#0a7bc8" fillRule="evenodd" /><path d="M17 0l7 3v18l-7 3z" fill="#25a0ec" /></svg>
      </Cell>
      <Cell>
        <span className="absolute inset-y-0 left-[1.500px] w-[49px] bg-[#f4f2f5]" />
        <span className="absolute inset-y-0 left-[50px] w-[2px] bg-[#b8b5ba]" />
        <span className="absolute inset-y-0 left-[52px] w-[4px] bg-[#ebe9ec]" />
        <svg className="relative" width="24" height="24" viewBox="0 0 24 24"><path d="M0 0h24v24H0z" fill="#0f78d8" /><path d="M12 3h7v18h-7z" fill="#d9a013" /><path d="M8.500 7.500H15V21H8.500z" fill="#edb92e" /><path d="M4.500 12H11v9H4.500z" fill="#f9d96b" /></svg>
        <span className="absolute bottom-0 left-[1.500px] h-[3px] w-[50px] bg-[#0078d7]" />
        <span className="absolute bottom-0 left-[51.500px] h-[3px] w-[5px] bg-[#66aee6]" />
      </Cell>
      <Cell>
        <span className="absolute inset-y-0 left-[1.500px] w-[55px] bg-[#efeef1]" />
        <svg className="relative" width="20" height="23" viewBox="0 0 20 23"><path d="M3 16h14l3 6.500H0z" fill="#f08a10" /><path d="M8.500 0h3l5 17q-6.500 3-13 0z" fill="#f58c14" /><path d="M7.300 4.500h5.400l1.300 4q-4 1.500-8 0zM5.200 12h9.600l1 3.500q-5.500 2-11.600 0z" fill="#f4f0ea" /></svg>
        <span className="absolute bottom-0 left-[1.500px] h-[3px] w-[55px] bg-[#0078d7]" />
      </Cell>

      <div className="ml-auto flex h-full items-center">
        <svg className="mt-[2px]" width="35" height="31" viewBox="0 0 35 31"><path d="M16.500 1C26 6 29.500 13 26 21c-3 5-10 6-16 4 8-4 10.500-12 6.500-24z" fill="#ffc916" /><path d="M16.500 1c5 9 5 19-5 23" fill="#ffdf4a" /><ellipse cx="11" cy="24" rx="10" ry="3.800" fill="#e6dcd6" /><ellipse cx="24" cy="25.500" rx="10" ry="3.500" fill="#dccfc6" /><ellipse cx="14" cy="28" rx="9" ry="2.500" fill="#cfc3ba" /></svg>
        <span className="ml-[13px] w-[56px] whitespace-nowrap pt-[4px] text-[19px]">28°C</span>
        <span className="w-[80px] pt-[4px] text-[19.400px] tracking-[0.100px]">Smoke</span>
        <svg className="mb-[2px]" width="18" height="11" viewBox="0 0 18 11" fill="none" stroke="#000" strokeWidth="1.300"><path d="M.6 10L9 1l8.400 9" /></svg>
        <svg className="ml-[19px]" width="17" height="24" viewBox="0 0 17 24" fill="none" stroke="#000" strokeWidth="1.300"><rect x="1" y="6" width="10.500" height="12" rx="2" /><path d="M11.500 10.500L16 7.500v9l-4.500-3M3 3q5.500-3.500 11 0M3 21q5.500 3.500 11 0" /></svg>
        <svg className="ml-[14px]" width="26" height="26" viewBox="0 0 26 26" fill="none" stroke="#000" strokeWidth="1.300"><path d="M14 23L1 21V5.500L24 2v14" /><path d="M7 12q5-5.500 9.500-.5M16.500 8v4h-4M16 15q-5 4.500-9 .5M7 19v-4h4" /><circle cx="19" cy="20" r="5.700" fill="#2a70c0" stroke="none" /></svg>
        <svg className="ml-[11px] mt-[2px]" width="24" height="14" viewBox="0 0 24 14" fill="none" stroke="#000" strokeWidth="1.300"><path d="M1 1h20.500v12H1zM22 4.500h1.500v5H22" /><path d="M3 3h5.500v8H3z" fill="#000" stroke="none" /></svg>
        <svg className="ml-[15px] mt-[2px]" width="20" height="20" viewBox="0 0 20 20" fill="none" stroke="#000" strokeWidth="1.300"><path d="M1 19C1 9 8 1.500 19 1.200M5.500 19.500C5.500 12 10.500 6.500 19 6M10 19.500c0-4.500 3-8 9-8.500M14 19.500c0-2 1.500-4 5-4" /><circle cx="17.500" cy="18.500" r="1.400" fill="#000" stroke="none" /></svg>
        <svg className="ml-[14px]" width="24" height="20" viewBox="0 0 24 20" fill="none" stroke="#000" strokeWidth="1.300"><path d="M1 6.500h4L10 1.500v17l-5-5H1zM13 7.500q1.500 2.500 0 5M16 5q3 5 0 10M19.500 2.500q4.500 7.500 0 15" /></svg>
        <span className="ml-[15px] w-[55px] pt-[2px] text-[16.500px] tracking-[-0.200px]">ENG</span>
        <span className="w-[71px] pt-[2px] text-[17px] tracking-[-0.200px]">18:35</span>
        <svg className="mb-px" width="24" height="25" viewBox="0 0 24 25"><path d="M0 0h24v19h-8l-5 5-5-5H0z" /><path d="M5 6h14M5 9.500h14M5 13h8" stroke="#e8dfd8" strokeWidth="1.200" /></svg>
        <span className="ml-[30px] mr-[6px] h-full w-[2px] bg-[#b5a9a0]" />
      </div>
      <span className="absolute -top-px right-[7px] h-px w-[33px] bg-[#3a96cd]" />
    </div>
  );
}

export default function App() {
  return (
    <div className="flex h-[1080px] w-[1920px] flex-col overflow-hidden bg-[#f3f2f1] font-['Open_Sans','Noto_Sans',sans-serif]">
      <TitleBar />
      <Ribbon />
      <main className="flex h-[758px] shrink-0">
        <SideNav />
        <div className="flex w-[1316px] shrink-0 flex-col">
          <div className="flex h-[706px]">
            <Canvas />
            <FiltersPane />
          </div>
          <PageTabs />
        </div>
        <VisualizationsPane />
        <FieldsPane />
      </main>
      <StatusBar />
      <Taskbar />
    </div>
  );
}
